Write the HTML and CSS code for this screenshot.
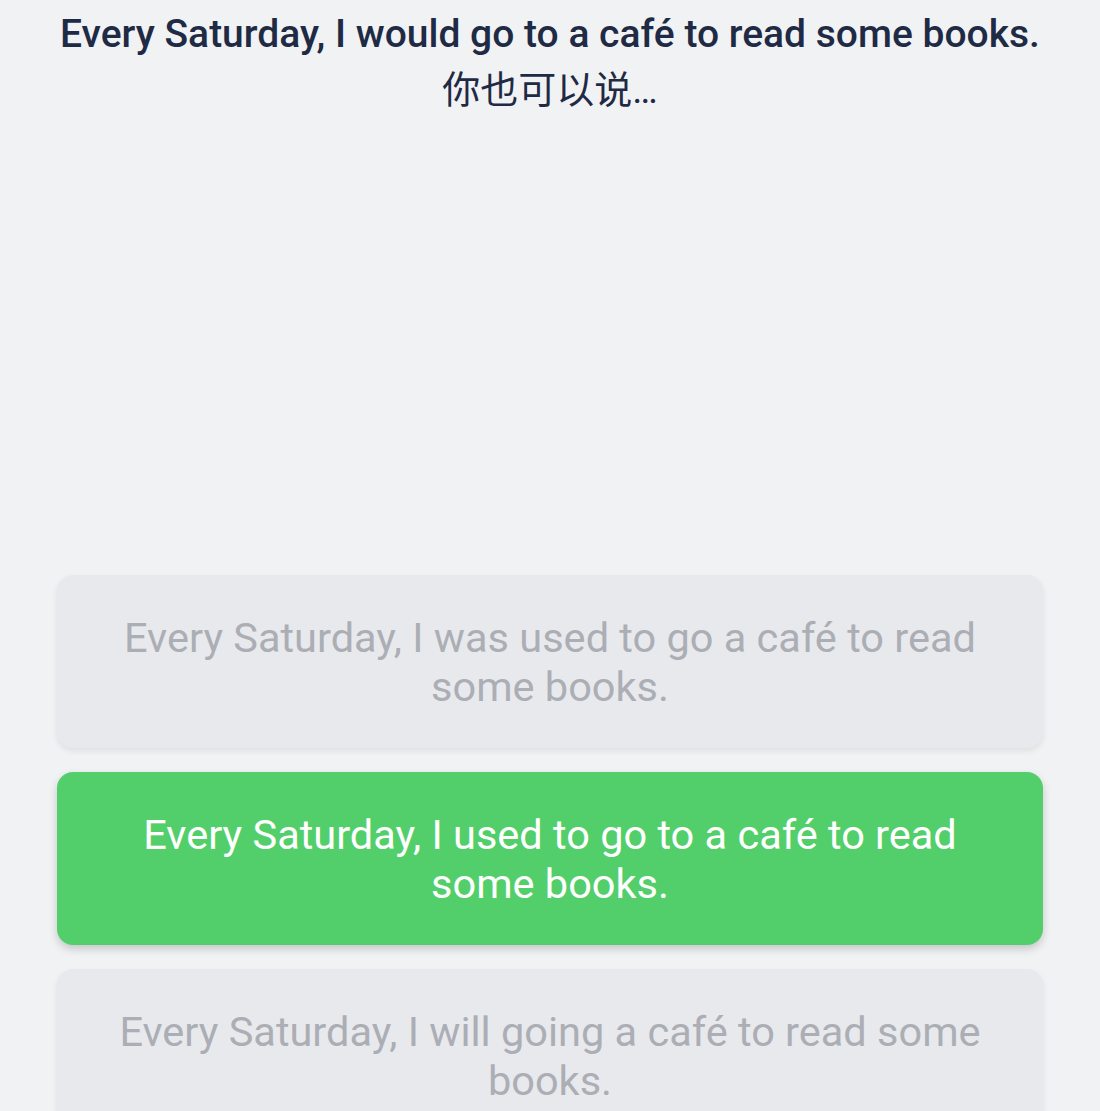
FILE: index.html
```html
<!DOCTYPE html>
<html lang="zh-CN">
<head>
<meta charset="utf-8">
<link rel="stylesheet" href="styles.css">
</head>
<body>
<div class="page">
  <header class="prompt">
    <p class="sentence">Every Saturday, I would go to a café to read some books.</p>
    <p class="hint">你也可以说…</p>
  </header>
  <div class="options">
    <div class="option">Every Saturday, I was used to go a café to read some books.</div>
    <div class="option correct">Every Saturday, I used to go to a café to read some books.</div>
    <div class="option">Every Saturday, I will going a café to read some books.</div>
  </div>
</div>
</body>
</html>
```
FILE: styles.css
```css
html, body {
  margin: 0;
  padding: 0;
  background: #f1f2f4;
}
.page {
  width: 1100px;
  height: 1111px;
  overflow: hidden;
  font-family: Roboto, "Noto Sans CJK SC", sans-serif;
}
.prompt {
  text-align: center;
  padding-top: 8px;
  height: 568px;
  box-sizing: border-box;
}
.sentence {
  margin: 0;
  font-size: 39px;
  font-weight: 500;
  color: #1f2a44;
  line-height: 52px;
}
.hint {
  margin: 2px 0 0;
  font-size: 38px;
  color: #1f2a44;
  line-height: 56px;
}
.options {
  display: flex;
  flex-direction: column;
  gap: 24px;
  padding: 7px 57px 0;
}
.option {
  background: #e8e9ec;
  border-radius: 16px;
  min-height: 173px;
  box-sizing: border-box;
  padding: 36px 40px;
  display: flex;
  align-items: center;
  justify-content: center;
  text-align: center;
  font-size: 41.5px;
  line-height: 49px;
  color: #acaeb5;
  box-shadow: 0 3px 6px rgba(0,0,0,0.08);
}
.option.correct {
  background: #52cf6a;
  color: #ffffff;
  box-shadow: 0 4px 8px rgba(0,0,0,0.18);
}
```
